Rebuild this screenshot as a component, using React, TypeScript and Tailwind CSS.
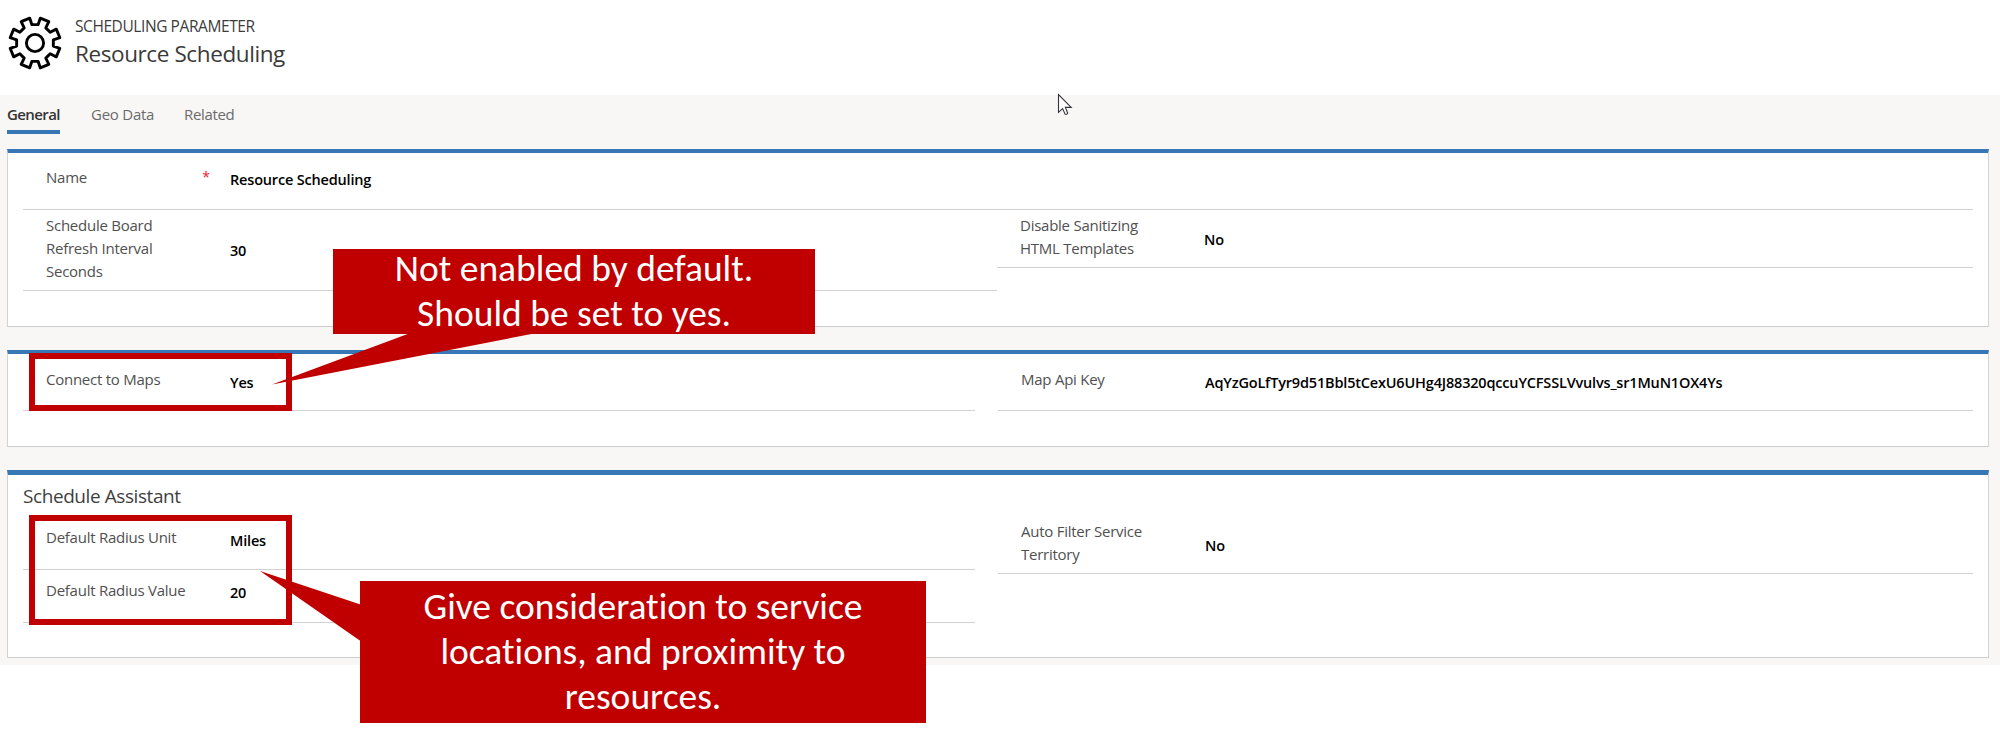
import type { ReactNode } from "react";

function polar(radius: number, degrees: number) {
  const a = (degrees * Math.PI) / 180;
  return `${(27 + radius * Math.sin(a)).toFixed(2)},${(27 - radius * Math.cos(a)).toFixed(2)}`;
}

const gearPoints = Array.from({ length: 8 }, (_, i) => i * 45)
  .flatMap((d) => [polar(18.6, d - 9.5), polar(18.6, d + 9.5), polar(25.4, d + 12), polar(25.4, d + 33)])
  .join(" ");

function GearIcon() {
  return (
    <svg width="54" height="54" viewBox="0 0 54 54" fill="none" stroke="#000" strokeWidth="2.9" strokeLinejoin="round">
      <polygon points={gearPoints} />
      <circle cx="27" cy="27" r="8.6" />
    </svg>
  );
}

function Label({ children, className }: { children: ReactNode; className: string }) {
  return (
    <div className={`shrink-0 whitespace-pre-line text-[15px] leading-[23px] tracking-[-0.25px] text-[#505050] ${className}`}>
      {children}
    </div>
  );
}

function Value({ children, className }: { children: ReactNode; className: string }) {
  return (
    <div className={`whitespace-nowrap text-[14.5px] font-[560] leading-[23px] tracking-[-0.18px] text-black ${className}`}>
      {children}
    </div>
  );
}

function Field({
  label,
  value,
  required,
  box,
  labelPad,
  valuePad,
}: {
  label: string;
  value: string;
  required?: boolean;
  box: string;
  labelPad: string;
  valuePad: string;
}) {
  return (
    <div className={`flex border-b border-[#d2d2d2] pl-[23px] ${box}`}>
      <div className="flex w-[184px] shrink-0 justify-between pr-[20px]">
        <Label className={labelPad}>{label}</Label>
        {required && <span className="pt-[12px] text-[14px] leading-[23px] text-[#f0202a]">*</span>}
      </div>
      <Value className={valuePad}>{value}</Value>
    </div>
  );
}

function Card({ children, className }: { children: ReactNode; className: string }) {
  return (
    <section className={`w-[1982px] border-x border-b border-x-[#d4d4d4] border-b-[#cccccc] border-t-[#3877b6] bg-white pl-[15px] pr-[15px] ${className}`}>
      {children}
    </section>
  );
}

export default function App() {
  return (
    <div className="relative h-[742px] w-[2000px] overflow-hidden bg-white font-['Open_Sans','Noto_Sans',sans-serif]">
      <header className="flex h-[95px] items-start pl-[8px] pt-[16px]">
        <GearIcon />
        <div className="pl-[13px]">
          <div className="h-[23px] text-[15.5px] leading-[20px] tracking-[-0.42px] text-[#3c3c3c]">SCHEDULING PARAMETER</div>
          <h1 className="text-[22.5px] leading-[30px] tracking-[-0.4px] text-[#3a3a3a]">Resource Scheduling</h1>
        </div>
      </header>

      <main className="h-[570px] bg-[#f8f7f5] pl-[7px]">
        <nav className="flex h-[54px] gap-[31px] pt-[8px] text-[15px] leading-[23px] text-[#6b6b6b]">
          <div className="-ml-px h-[31px] w-[54px] pl-px">
            <div className="h-[31px] w-[53px] border-b-[4px] border-[#3877b6] font-semibold tracking-[-0.6px] text-[#333]">General</div>
          </div>
          <div className="w-[62px] whitespace-nowrap tracking-[-0.25px]">Geo Data</div>
          <div className="tracking-[-0.35px]">Related</div>
        </nav>

        <Card className="h-[178px] border-t-[4px]">
          <Field label="Name" value="Resource Scheduling" required box="h-[57px] w-[1950px]" labelPad="pt-[13px]" valuePad="pt-[15px]" />
          <div className="flex items-start">
            <Field
              label={"Schedule Board\nRefresh Interval\nSeconds"}
              value="30"
              box="h-[81px] w-[974px]"
              labelPad="pt-[4px]"
              valuePad="pt-[29px]"
            />
            <Field
              label={"Disable Sanitizing\nHTML Templates"}
              value="No"
              box="h-[58px] w-[976px]"
              labelPad="pt-[4px]"
              valuePad="pt-[18px]"
            />
          </div>
        </Card>

        <Card className="mt-[23px] h-[97px] border-t-[4px]">
          <div className="flex items-start gap-[23px]">
            <Field label="Connect to Maps" value="Yes" box="h-[57px] w-[952px]" labelPad="pt-[14px]" valuePad="pt-[17px]" />
            <Field
              label="Map Api Key"
              value="AqYzGoLfTyr9d51Bbl5tCexU6UHg4J88320qccuYCFSSLVvulvs_sr1MuN1OX4Ys"
              box="h-[57px] w-[975px]"
              labelPad="pt-[14px]"
              valuePad="pt-[17px]"
            />
          </div>
        </Card>

        <Card className="mt-[23px] h-[188px] border-t-[5px]">
          <h2 className="h-[35px] pt-[7px] text-[19px] leading-[28px] tracking-[-0.42px] text-[#3f3f3f]">Schedule Assistant</h2>
          <div className="flex items-start gap-[23px]">
            <div>
              <Field label="Default Radius Unit" value="Miles" box="h-[60px] w-[952px]" labelPad="pt-[16px]" valuePad="pt-[19px]" />
              <Field label="Default Radius Value" value="20" box="h-[53px] w-[952px]" labelPad="pt-[9px]" valuePad="pt-[11px]" />
            </div>
            <Field
              label={"Auto Filter Service\nTerritory"}
              value="No"
              box="h-[64px] w-[975px]"
              labelPad="pt-[10px]"
              valuePad="pt-[24px]"
            />
          </div>
        </Card>
      </main>

      <div className="absolute left-[29px] top-[353px] h-[58px] w-[263px] border-[6px] border-[#c00000]" />
      <div className="absolute left-[29px] top-[515px] h-[110px] w-[263px] border-[6px] border-[#c00000]" />

      <svg className="absolute left-[260px] top-[330px]" width="280" height="320" viewBox="260 330 280 320" fill="#c00000">
        <polygon points="272,384.5 409,333.5 534,333.5" />
        <polygon points="260,571 360.5,604.5 360.5,641" />
      </svg>

      <div className="absolute left-[333px] top-[249px] flex h-[85px] w-[482px] items-center justify-center bg-[#c00000] pb-[2px] text-center font-['Carlito','Lato',sans-serif] text-[37.5px] leading-[45px] text-white [font-variant-ligatures:none]">
        <p>
          Not enabled by default.
          <br />
          Should be set to yes.
        </p>
      </div>
      <div className="absolute left-[360px] top-[581px] flex h-[142px] w-[566px] items-center justify-center bg-[#c00000] pb-[2px] text-center font-['Carlito','Lato',sans-serif] text-[37.5px] leading-[45px] text-white [font-variant-ligatures:none]">
        <p>
          Give consideration to service
          <br />
          locations, and proximity to
          <br />
          resources.
        </p>
      </div>

      <svg className="absolute left-[1057px] top-[93px]" width="17" height="24" viewBox="0 0 17 24" fill="#fff" stroke="#32323c" strokeWidth="1.1">
        <path d="M1.5 1.5V19.3L5.6 15.6L8 21Q9.4 22 10.7 20.2L8.4 14.4H14.2Z" />
      </svg>
    </div>
  );
}
